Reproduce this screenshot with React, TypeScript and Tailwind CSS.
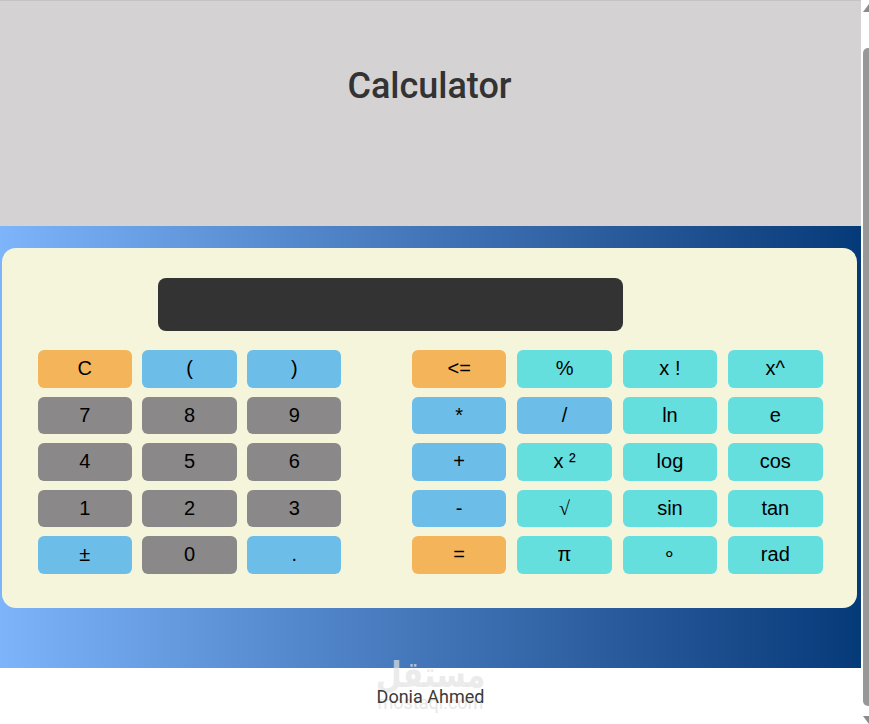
const orange = "bg-[#f4b55a]";
const blue = "bg-[#6dbde9]";
const gray = "bg-[#8a8888]";
const teal = "bg-[#65dede]";

type Key = { label: string; color: string; font?: string };

const leftKeys: Key[] = [
  { label: "C", color: orange },
  { label: "(", color: blue },
  { label: ")", color: blue },
  { label: "7", color: gray },
  { label: "8", color: gray },
  { label: "9", color: gray },
  { label: "4", color: gray },
  { label: "5", color: gray },
  { label: "6", color: gray },
  { label: "1", color: gray },
  { label: "2", color: gray },
  { label: "3", color: gray },
  { label: "±", color: blue },
  { label: "0", color: gray },
  { label: ".", color: blue },
];

const rightKeys: Key[] = [
  { label: "<=", color: orange },
  { label: "%", color: teal },
  { label: "x !", color: teal },
  { label: "x^", color: teal },
  { label: "*", color: blue },
  { label: "/", color: blue },
  { label: "ln", color: teal },
  { label: "e", color: teal },
  { label: "+", color: blue },
  { label: "x ²", color: teal },
  { label: "log", color: teal },
  { label: "cos", color: teal },
  { label: "-", color: blue },
  { label: "√", color: teal, font: "font-['Liberation_Serif',serif]" },
  { label: "sin", color: teal },
  { label: "tan", color: teal },
  { label: "=", color: orange },
  { label: "π", color: teal },
  { label: "∘", color: teal },
  { label: "rad", color: teal },
];

function CalcButton({ label, color, font }: Key) {
  return (
    <button
      className={`${color} h-[37.5px] rounded-[6px] pb-[1px] text-[20px] leading-none text-black ${font ?? "font-['Liberation_Sans',sans-serif]"}`}
    >
      {label}
    </button>
  );
}

function Scrollbar() {
  return (
    <div className="flex w-[8px] shrink-0 flex-col items-end bg-white">
      <svg width="6" height="8" viewBox="0 0 6 8" className="mt-[4px]">
        <path d="M6 0 L6 8 L0 8 Z" fill="#8f8a8a" />
      </svg>
      <div className="mt-[36px] h-[658px] w-[6px] rounded-bl-[5px] rounded-tl-[5px] bg-[#989898]" />
      <svg width="6" height="8" viewBox="0 0 6 8" className="mt-[10px]">
        <path d="M0 0 L6 0 L6 8 Z" fill="#8f8a8a" />
      </svg>
    </div>
  );
}

export default function App() {
  return (
    <div className="flex h-[724px] w-[869px] overflow-hidden bg-white">
      <div className="w-[861px] shrink-0">
        <header className="flex h-[226px] items-start justify-center border-t border-[#c4c2c3] bg-[#d4d2d3] pt-[62px] pr-[2px]">
          <h1 className="text-[36px] leading-[46px] font-medium text-[#333333] font-['Roboto',sans-serif]">Calculator</h1>
        </header>

        <main className="h-[442px] bg-gradient-to-r from-[#7db4fa] to-[#053a79] pt-[22px] pl-[2px] pr-[4px]">
          <div className="h-[360px] rounded-[14px] bg-[#f5f5dc] pt-[30px] pl-[35.6px]">
            <div className="ml-[120.4px] h-[53px] w-[465px] rounded-[8px] bg-[#333333]" />
            <div className="mt-[19px] flex gap-[70.4px]">
              <div className="grid w-[303.8px] grid-cols-3 gap-x-[10.5px] gap-y-[9px]">
                {leftKeys.map((k) => (
                  <CalcButton key={k.label} {...k} />
                ))}
              </div>
              <div className="grid w-[410.9px] grid-cols-4 gap-x-[10.7px] gap-y-[9px]">
                {rightKeys.map((k) => (
                  <CalcButton key={k.label} {...k} />
                ))}
              </div>
            </div>
          </div>
        </main>

        <footer className="relative h-[56px] bg-white pt-[18px] text-center text-[18px] leading-[22px] text-[#3a3a3a] font-['Roboto',sans-serif]">
          <div className="absolute left-0 right-0 top-[-13px] scale-y-[1.2] text-center text-[30px] leading-[40px] font-bold text-[#e2e2e2]/70 font-['DejaVu_Sans',sans-serif]">
            مستقل
          </div>
          <div className="absolute left-0 right-0 top-[28px] text-center text-[18px] leading-[14px] text-[#e8e8e8] font-['Roboto',sans-serif]">
            mostaql.com
          </div>
          <span className="relative">Donia Ahmed</span>
        </footer>
      </div>
      <Scrollbar />
    </div>
  );
}
